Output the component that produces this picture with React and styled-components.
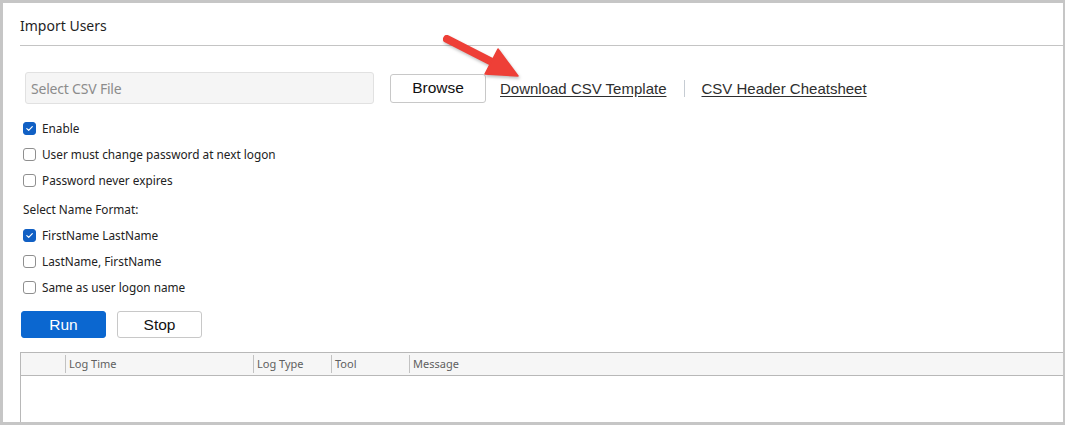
import React from 'react'
import styled, { createGlobalStyle } from 'styled-components'

const Global = createGlobalStyle`
    html, body {
        margin: 0;
        padding: 0;
        background: #ffffff;
    }
    * {
        box-sizing: border-box;
    }
`

const Frame = styled.div`
    position: relative;
    width: 1065px;
    height: 425px;
    overflow: hidden;
    background: #ffffff;
    border-style: solid;
    border-color: #c6c6c6;
    border-width: 3px 2px 3px 3px;
    font-family: "Noto Sans", "Open Sans", sans-serif;
`

const Header = styled.div`
    margin-left: 17px;
    height: 43px;
    padding-top: 14px;
    border-bottom: 1px solid #c4c4c4;
    font-size: 14px;
    line-height: 18px;
    color: #1f1f1f;
`

const Content = styled.div`
    padding-left: 17px;
    display: flex;
    flex-direction: column;
`

const FileRow = styled.div`
    display: flex;
    align-items: center;
    margin: 26px 0 0 5px;
    height: 32px;
`

const FileInput = styled.div`
    width: 349px;
    height: 32px;
    background: #f5f5f5;
    border: 1px solid #e1e1e1;
    border-radius: 3px;
    padding-left: 5px;
    display: flex;
    align-items: center;
    font-size: 14px;
    letter-spacing: -0.2px;
    color: #8c8c8c;
`

const Button = styled.button`
    width: ${p => p.$w || 85}px;
    height: ${p => p.$h || 27}px;
    margin-left: ${p => p.$ml || 0}px;
    border-radius: 3px;
    border: 1px solid ${p => (p.$primary ? '#0b67d0' : '#c8c8c8')};
    background: ${p => (p.$primary ? '#0b67d0' : '#ffffff')};
    color: ${p => (p.$primary ? '#ffffff' : '#111111')};
    font-family: "Liberation Sans", Arial, sans-serif;
    font-size: 15.5px;
    padding: 0;
    cursor: pointer;
`

const Link = styled.a`
    font-family: "Liberation Sans", Arial, sans-serif;
    font-size: 15px;
    color: #2e2e2e;
    text-decoration: underline;
    text-underline-offset: 2px;
    margin-left: ${p => p.$ml || 0}px;
    cursor: pointer;
`

const Divider = styled.span`
    width: 1px;
    height: 17px;
    background: #c6ccd3;
    margin: 0 16px 0 18px;
`

const Checks = styled.div`
    margin: 11px 0 0 3px;
    display: flex;
    flex-direction: column;
`

const CheckRow = styled.label`
    height: 26px;
    display: flex;
    align-items: center;
    gap: 6px;
    font-size: 11.8px;
    color: #222222;
`

const Box = styled.span`
    width: 13px;
    height: 13px;
    border-radius: 3px;
    border: 1px solid ${p => (p.$on ? '#1160c4' : '#8f8f8f')};
    background: ${p => (p.$on ? '#1160c4' : '#ffffff')};
    display: flex;
    align-items: center;
    justify-content: center;
`

const SectionLabel = styled.div`
    padding-top: 3px;
    line-height: 26px;
    font-size: 11.8px;
    color: #222222;
`

const Actions = styled.div`
    display: flex;
    margin: 11px 0 0 1px;
`

const Table = styled.div`
    margin-top: 14px;
    border-top: 1px solid #b8b8b8;
    border-left: 1px solid #b8b8b8;
    height: 80px;
`

const HeadRow = styled.div`
    display: flex;
    align-items: center;
    height: 23px;
    background: #f6f6f6;
    border-bottom: 1px solid #b8b8b8;
`

const HeadCell = styled.div`
    width: ${p => (p.$w ? `${p.$w}px` : 'auto')};
    flex: ${p => (p.$w ? 'none' : '1')};
    height: 18px;
    line-height: 18px;
    padding-left: 3px;
    border-left: ${p => (p.$first ? 'none' : '1px solid #c2c2c2')};
    font-size: 11px;
    color: #5f5f5f;
`

const Arrow = styled.svg`
    position: absolute;
    left: 427px;
    top: 22px;
    width: 100px;
    height: 60px;
    filter: drop-shadow(1px 2px 1.5px rgba(0, 0, 0, 0.25));
`

const Check = ({ on, children }) => (
    <CheckRow>
        <Box $on={on}>
            {on && (
                <svg width="9" height="9" viewBox="0 0 9 9">
                    <path d="M1.8 4.6 L3.7 6.4 L7.3 2.6" fill="none" stroke="#ffffff" strokeWidth="1.2" strokeLinecap="round" strokeLinejoin="round" />
                </svg>
            )}
        </Box>
        {children}
    </CheckRow>
)

export default function App() {
    return (
        <>
            <Global />
            <Frame>
                <Header>Import Users</Header>
                <Content>
                    <FileRow>
                        <FileInput>Select CSV File</FileInput>
                        <Button $w={96} $h={29} $ml={16}>Browse</Button>
                        <Link $ml={14}>Download CSV Template</Link>
                        <Divider />
                        <Link>CSV Header Cheatsheet</Link>
                    </FileRow>
                    <Checks>
                        <Check on>Enable</Check>
                        <Check>User must change password at next logon</Check>
                        <Check>Password never expires</Check>
                        <SectionLabel>Select Name Format:</SectionLabel>
                        <Check on>FirstName LastName</Check>
                        <Check>LastName, FirstName</Check>
                        <Check>Same as user logon name</Check>
                    </Checks>
                    <Actions>
                        <Button $primary>Run</Button>
                        <Button $ml={11}>Stop</Button>
                    </Actions>
                    <Table>
                        <HeadRow>
                            <HeadCell $w={44} $first />
                            <HeadCell $w={188}>Log Time</HeadCell>
                            <HeadCell $w={78}>Log Type</HeadCell>
                            <HeadCell $w={78}>Tool</HeadCell>
                            <HeadCell>Message</HeadCell>
                        </HeadRow>
                    </Table>
                </Content>
                <Arrow viewBox="430 25 100 60">
                    <line x1="447" y1="39" x2="494" y2="63" stroke="#ee3f37" strokeWidth="8" strokeLinecap="round" />
                    <polygon points="518,76 485,74 498,49" fill="#ee3f37" stroke="#ee3f37" strokeWidth="1.5" strokeLinejoin="round" />
                </Arrow>
            </Frame>
        </>
    )
}
